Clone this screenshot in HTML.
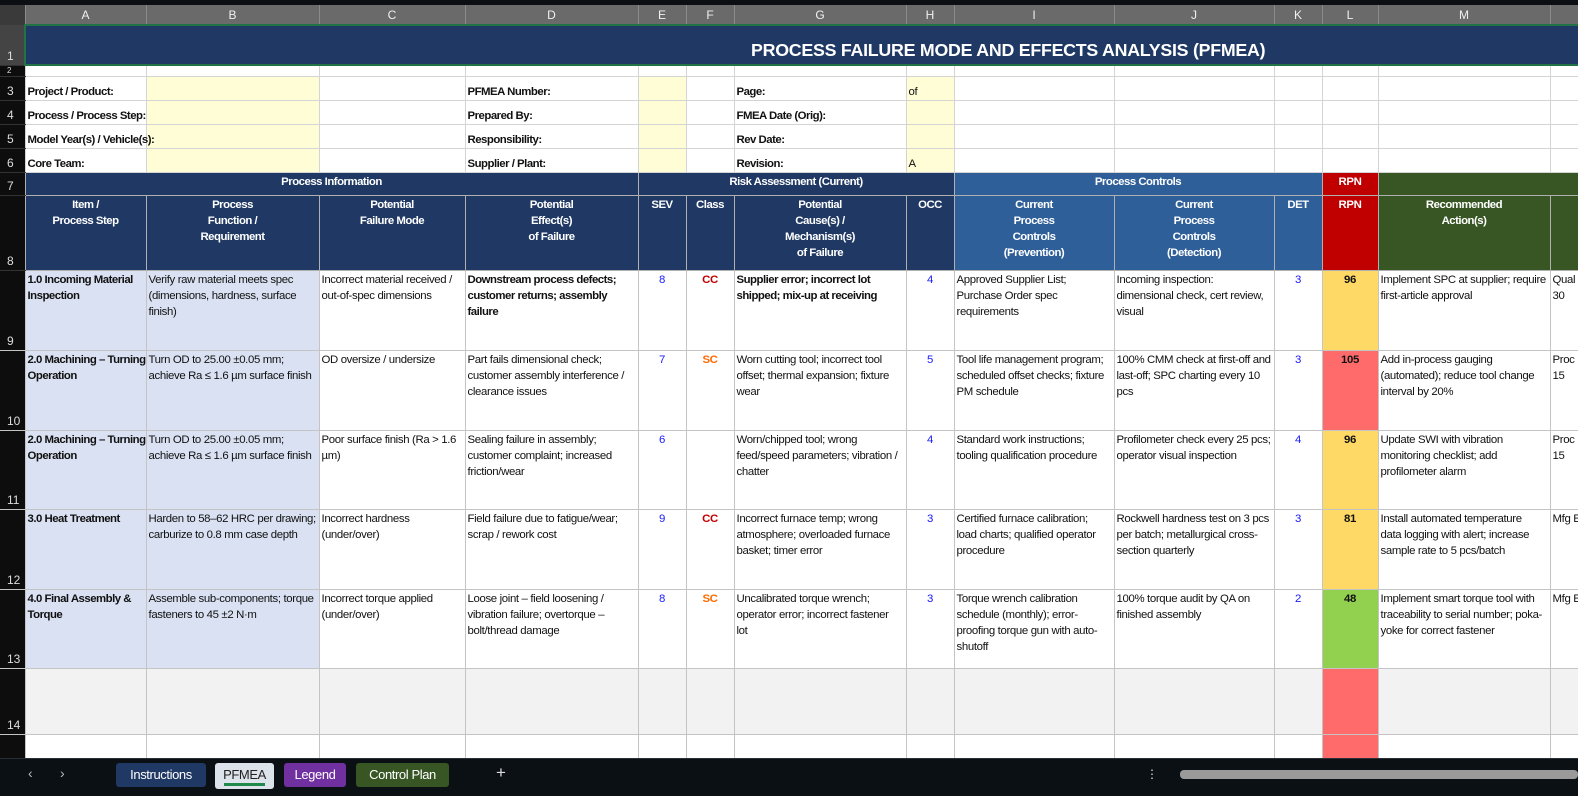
<!DOCTYPE html>
<html><head><meta charset="utf-8"><style>
*{margin:0;padding:0;box-sizing:border-box}
body{width:1578px;height:796px;background:#0b0f14;overflow:hidden;font-family:"Liberation Sans",sans-serif;position:relative}
table{position:absolute;left:0;top:5px;border-collapse:collapse;table-layout:fixed;width:1586px}
td{border:1px solid #d4d4d4;font-size:11.4px;letter-spacing:-0.35px;line-height:16px;vertical-align:top;padding:1px 2px 0 2px;white-space:nowrap;overflow:hidden;color:#111;background:#fff}
td.rh{background:#0d0d0d;color:#ddd;border:none;border-bottom:1px solid #333;vertical-align:bottom;padding:0 0 1px 7px;font-size:12px;letter-spacing:0}
tr.ch td{background:#6a6a6a;color:#f0f0f0;text-align:center;vertical-align:middle;font-size:12px;letter-spacing:0;border:none;border-right:1px solid #8a8a8a;line-height:18px;padding:0}
tr.ch td.rh{background:#3a3a3a}
.b{font-weight:bold;letter-spacing:-0.5px}
.y{background:#fffdd6}
.lb{background:#d9e1f2}
.nv{background:#1f3864;color:#fff;font-weight:bold;text-align:center;border-color:#b0b0b0;letter-spacing:-0.5px}
.pc{background:#2e5f99;color:#fff;font-weight:bold;text-align:center;border-color:#b0b0b0;letter-spacing:-0.5px}
.rd{background:#c00000;color:#fff;font-weight:bold;text-align:center;border-color:#b0b0b0}
.gr{background:#375623;color:#fff;font-weight:bold;text-align:center;border-color:#b0b0b0;letter-spacing:-0.5px}
.n{color:#1a1aff;text-align:center}
.cc{color:#c00000;font-weight:bold;text-align:center}
.sc{color:#ff6a00;font-weight:bold;text-align:center}
.r{font-weight:bold;text-align:center;background:#ffd966}
.rr{font-weight:bold;text-align:center;background:#ff6b6b}
.rg{font-weight:bold;text-align:center;background:#92d050}
tr.d td{border-color:#c4c4c4}
tr.e td{background:#f2f2f2}
</style></head><body>
<table>
<colgroup><col style="width:25px"><col style="width:121px"><col style="width:173px"><col style="width:146px"><col style="width:173px"><col style="width:48px"><col style="width:48px"><col style="width:172px"><col style="width:48px"><col style="width:160px"><col style="width:160px"><col style="width:48px"><col style="width:56px"><col style="width:172px"><col style="width:36px"></colgroup>
<tr class="ch" style="height:20px"><td class="rh"></td><td>A</td><td>B</td><td>C</td><td>D</td><td>E</td><td>F</td><td>G</td><td>H</td><td>I</td><td>J</td><td>K</td><td>L</td><td>M</td><td></td></tr>
<tr style="height:40px"><td class="rh" style="background:#444">1</td><td colspan="14" style="background:#1f3864;border:2px solid #217346;"></td></tr>
<tr style="height:11px"><td class="rh" style="font-size:8px;line-height:8px">2</td><td></td><td></td><td></td><td></td><td></td><td></td><td></td><td></td><td></td><td></td><td></td><td></td><td></td><td></td></tr>
<tr style="height:24px"><td class="rh">3</td><td class="b" style="vertical-align:bottom;overflow:visible">Project / Product:</td><td class="y"></td><td></td><td class="b" style="vertical-align:bottom">PFMEA Number:</td><td class="y"></td><td></td><td class="b" style="vertical-align:bottom">Page:</td><td class="y" style="vertical-align:bottom">of</td><td></td><td></td><td></td><td></td><td></td><td></td></tr>
<tr style="height:24px"><td class="rh">4</td><td class="b" style="vertical-align:bottom;overflow:visible;position:relative;z-index:2">Process / Process Step:</td><td class="y"></td><td></td><td class="b" style="vertical-align:bottom">Prepared By:</td><td class="y"></td><td></td><td class="b" style="vertical-align:bottom">FMEA Date (Orig):</td><td class="y"></td><td></td><td></td><td></td><td></td><td></td><td></td></tr>
<tr style="height:24px"><td class="rh">5</td><td class="b" style="vertical-align:bottom;overflow:visible;position:relative;z-index:2">Model Year(s) / Vehicle(s):</td><td class="y"></td><td></td><td class="b" style="vertical-align:bottom">Responsibility:</td><td class="y"></td><td></td><td class="b" style="vertical-align:bottom">Rev Date:</td><td class="y"></td><td></td><td></td><td></td><td></td><td></td><td></td></tr>
<tr style="height:24px"><td class="rh">6</td><td class="b" style="vertical-align:bottom">Core Team:</td><td class="y"></td><td></td><td class="b" style="vertical-align:bottom">Supplier / Plant:</td><td class="y"></td><td></td><td class="b" style="vertical-align:bottom">Revision:</td><td class="y" style="vertical-align:bottom">A</td><td></td><td></td><td></td><td></td><td></td><td></td></tr>
<tr style="height:23px"><td class="rh">7</td><td colspan="4" class="nv">Process Information</td><td colspan="4" class="nv">Risk Assessment (Current)</td><td colspan="3" class="pc">Process Controls</td><td class="rd">RPN</td><td colspan="2" class="gr"></td></tr>
<tr style="height:75px"><td class="rh">8</td>
<td class="nv">Item /<br>Process Step</td><td class="nv">Process<br>Function /<br>Requirement</td><td class="nv">Potential<br>Failure Mode</td><td class="nv">Potential<br>Effect(s)<br>of Failure</td><td class="nv">SEV</td><td class="nv">Class</td><td class="nv">Potential<br>Cause(s) /<br>Mechanism(s)<br>of Failure</td><td class="nv">OCC</td><td class="pc">Current<br>Process<br>Controls<br>(Prevention)</td><td class="pc">Current<br>Process<br>Controls<br>(Detection)</td><td class="pc">DET</td><td class="rd">RPN</td><td class="gr">Recommended<br>Action(s)</td><td class="gr"></td></tr>
<tr class="d" style="height:80px"><td class="rh">9</td><td class="lb b">1.0 Incoming Material<br>Inspection</td><td class="lb">Verify raw material meets spec<br>(dimensions, hardness, surface<br>finish)</td><td>Incorrect material received /<br>out-of-spec dimensions</td><td class="b">Downstream process defects;<br>customer returns; assembly<br>failure</td><td class="n">8</td><td class="cc">CC</td><td class="b">Supplier error; incorrect lot<br>shipped; mix-up at receiving</td><td class="n">4</td><td>Approved Supplier List;<br>Purchase Order spec<br>requirements</td><td>Incoming inspection:<br>dimensional check, cert review,<br>visual</td><td class="n">3</td><td class="r">96</td><td>Implement SPC at supplier; require<br>first-article approval</td><td>Qual<br>30</td></tr>
<tr class="d" style="height:80px"><td class="rh">10</td><td class="lb b">2.0 Machining – Turning<br>Operation</td><td class="lb">Turn OD to 25.00 ±0.05 mm;<br>achieve Ra ≤ 1.6 µm surface finish</td><td>OD oversize / undersize</td><td>Part fails dimensional check;<br>customer assembly interference /<br>clearance issues</td><td class="n">7</td><td class="sc">SC</td><td>Worn cutting tool; incorrect tool<br>offset; thermal expansion; fixture<br>wear</td><td class="n">5</td><td>Tool life management program;<br>scheduled offset checks; fixture<br>PM schedule</td><td>100% CMM check at first-off and<br>last-off; SPC charting every 10<br>pcs</td><td class="n">3</td><td class="rr">105</td><td>Add in-process gauging<br>(automated); reduce tool change<br>interval by 20%</td><td>Proc<br>15</td></tr>
<tr class="d" style="height:79px"><td class="rh">11</td><td class="lb b">2.0 Machining – Turning<br>Operation</td><td class="lb">Turn OD to 25.00 ±0.05 mm;<br>achieve Ra ≤ 1.6 µm surface finish</td><td>Poor surface finish (Ra &gt; 1.6<br>µm)</td><td>Sealing failure in assembly;<br>customer complaint; increased<br>friction/wear</td><td class="n">6</td><td></td><td>Worn/chipped tool; wrong<br>feed/speed parameters; vibration /<br>chatter</td><td class="n">4</td><td>Standard work instructions;<br>tooling qualification procedure</td><td>Profilometer check every 25 pcs;<br>operator visual inspection</td><td class="n">4</td><td class="r">96</td><td>Update SWI with vibration<br>monitoring checklist; add<br>profilometer alarm</td><td>Proc<br>15</td></tr>
<tr class="d" style="height:80px"><td class="rh">12</td><td class="lb b">3.0 Heat Treatment</td><td class="lb">Harden to 58–62 HRC per drawing;<br>carburize to 0.8 mm case depth</td><td>Incorrect hardness<br>(under/over)</td><td>Field failure due to fatigue/wear;<br>scrap / rework cost</td><td class="n">9</td><td class="cc">CC</td><td>Incorrect furnace temp; wrong<br>atmosphere; overloaded furnace<br>basket; timer error</td><td class="n">3</td><td>Certified furnace calibration;<br>load charts; qualified operator<br>procedure</td><td>Rockwell hardness test on 3 pcs<br>per batch; metallurgical cross-<br>section quarterly</td><td class="n">3</td><td class="r">81</td><td>Install automated temperature<br>data logging with alert; increase<br>sample rate to 5 pcs/batch</td><td>Mfg E</td></tr>
<tr class="d" style="height:79px"><td class="rh">13</td><td class="lb b">4.0 Final Assembly &amp;<br>Torque</td><td class="lb">Assemble sub-components; torque<br>fasteners to 45 ±2 N·m</td><td>Incorrect torque applied<br>(under/over)</td><td>Loose joint – field loosening /<br>vibration failure; overtorque –<br>bolt/thread damage</td><td class="n">8</td><td class="sc">SC</td><td>Uncalibrated torque wrench;<br>operator error; incorrect fastener<br>lot</td><td class="n">3</td><td>Torque wrench calibration<br>schedule (monthly); error-<br>proofing torque gun with auto-<br>shutoff</td><td>100% torque audit by QA on<br>finished assembly</td><td class="n">2</td><td class="rg">48</td><td>Implement smart torque tool with<br>traceability to serial number; poka-<br>yoke for correct fastener</td><td>Mfg E</td></tr>
<tr class="d e" style="height:66px"><td class="rh" style="background:#0d0d0d">14</td><td></td><td></td><td></td><td></td><td></td><td></td><td></td><td></td><td></td><td></td><td></td><td class="rr" style="background:#ff6b6b"></td><td></td><td></td></tr>
<tr class="d" style="height:26px"><td class="rh"></td><td></td><td></td><td></td><td></td><td></td><td></td><td></td><td></td><td></td><td></td><td></td><td class="rr"></td><td></td><td></td></tr>
</table>
<div style="position:absolute;left:751px;top:40px;color:#fff;font-weight:bold;font-size:17.8px;letter-spacing:-0.25px;white-space:nowrap">PROCESS FAILURE MODE AND EFFECTS ANALYSIS (PFMEA)</div>
<div style="position:absolute;left:0;top:758px;width:1578px;height:38px;background:#0b1015;border-top:1px solid #2a2f35">
<div style="position:absolute;left:28px;top:6px;color:#bbb;font-size:14px">&#x2039;</div>
<div style="position:absolute;left:60px;top:6px;color:#bbb;font-size:14px">&#x203A;</div>
<div style="position:absolute;left:116px;top:4px;width:90px;height:24px;background:#1f3864;border-radius:3px;color:#fff;font-size:13px;letter-spacing:-0.4px;text-align:center;line-height:24px">Instructions</div>
<div style="position:absolute;left:215px;top:4px;width:59px;height:26px;background:#dde3ea;border-radius:3px;color:#222;font-size:13px;letter-spacing:-0.4px;text-align:center;line-height:24px">PFMEA<div style="position:absolute;left:9px;right:9px;bottom:3px;height:3px;background:#1f8a4c"></div></div>
<div style="position:absolute;left:284px;top:4px;width:62px;height:24px;background:#7030a0;border-radius:3px;color:#fff;font-size:13px;letter-spacing:-0.4px;text-align:center;line-height:24px">Legend</div>
<div style="position:absolute;left:356px;top:4px;width:93px;height:24px;background:#375623;border-radius:3px;color:#fff;font-size:13px;letter-spacing:-0.4px;text-align:center;line-height:24px">Control Plan</div>
<div style="position:absolute;left:496px;top:4px;color:#ddd;font-size:17px">+</div>
<div style="position:absolute;left:1146px;top:8px;color:#ddd;font-size:12px">&#x22EE;</div>
<div style="position:absolute;left:1180px;top:11px;width:398px;height:9px;background:#9a9a9a;border-radius:4px"></div>
</div>
</body></html>
